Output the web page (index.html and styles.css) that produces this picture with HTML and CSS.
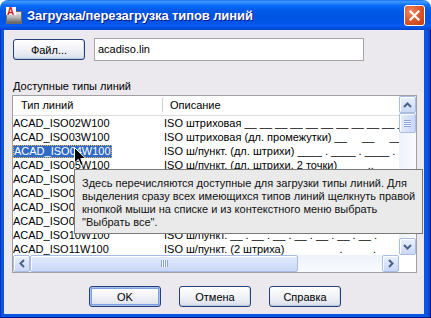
FILE: index.html
```html
<!DOCTYPE html>
<html lang="ru">
<head>
<meta charset="utf-8">
<title>Загрузка/перезагрузка типов линий</title>
<link rel="stylesheet" href="styles.css">
</head>
<body>
<div class="window">
  <div class="titlebar">
    <svg class="app-icon" width="16" height="17" viewBox="0 0 16 17">
      <defs>
        <linearGradient id="ig" x1="0" y1="0" x2="0" y2="1">
          <stop offset="0" stop-color="#f2f2f2"/>
          <stop offset="0.5" stop-color="#b4b4b4"/>
          <stop offset="1" stop-color="#5a5a5a"/>
        </linearGradient>
      </defs>
      <rect x="0.5" y="4.5" width="15" height="12" fill="url(#ig)" stroke="#6b6b6b"/>
      <rect x="0" y="0" width="10" height="8" fill="#fff"/>
      <text x="1" y="8" font-family="Liberation Sans, Arial, sans-serif" font-weight="bold" font-size="10" fill="#e01010">A</text>
    </svg>
    <span class="title">Загрузка/перезагрузка типов линий</span>
    <div class="close" aria-label="Закрыть">
      <svg width="11" height="11" viewBox="0 0 11 11"><path d="M1.5 1.5 L9.5 9.5 M9.5 1.5 L1.5 9.5" stroke="#fff" stroke-width="2.2" stroke-linecap="square"/></svg>
    </div>
  </div>
  <div class="frame">
    <div class="client">
      <div class="file-row">
        <button class="btn">Файл...</button>
        <div class="field">acadiso.lin</div>
      </div>
      <div class="label">Доступные типы линий</div>
      <div class="list">
        <div class="list-view">
          <div class="header">
            <div class="hcell h1">Тип линий</div>
            <div class="hcell h2">Описание</div>
          </div>
          <div class="row"><span class="c1">ACAD_ISO02W100</span><span class="c2">ISO штриховая __ __ __ __ __ __ __ __ __ __ __ __ __</span></div>
          <div class="row"><span class="c1">ACAD_ISO03W100</span><span class="c2">ISO штриховая (дл. промежутки) __     __     __</span></div>
          <div class="row selected"><span class="c1"><span class="sel">ACAD_ISO04W100</span></span><span class="c2">ISO ш/пункт. (дл. штрихи) ____ . ____ . ____ .</span></div>
          <div class="row"><span class="c1">ACAD_ISO05W100</span><span class="c2">ISO ш/пункт. (дл. штрихи, 2 точки) ____ .. ____ ..</span></div>
          <div class="row"><span class="c1">ACAD_ISO06W100</span><span class="c2">ISO ш/пункт. (дл. штрихи, 3 точки) ____ ... ____</span></div>
          <div class="row"><span class="c1">ACAD_ISO07W100</span><span class="c2">ISO точечная . . . . . . . . . . . . . . . . . . .</span></div>
          <div class="row"><span class="c1">ACAD_ISO08W100</span><span class="c2">ISO штриховая (дл. и кор. штрихи) ____ __ ____</span></div>
          <div class="row"><span class="c1">ACAD_ISO09W100</span><span class="c2">ISO штриховая (дл. и 2 кор. штриха) ____ __ __</span></div>
          <div class="row"><span class="c1">ACAD_ISO10W100</span><span class="c2">ISO ш/пункт. __ . __ . __ . __ . __ . __ . __ .</span></div>
          <div class="row"><span class="c1">ACAD_ISO11W100</span><span class="c2">ISO ш/пункт. (2 штриха)                  .          .            .</span></div>
        </div>
        <div class="vscroll">
          <div class="sb-btn">
            <svg width="9" height="6" viewBox="0 0 9 6"><path d="M1 5 L4.5 1.5 L8 5" fill="none" stroke="#4d6185" stroke-width="2"/></svg>
          </div>
          <div class="vthumb"><span class="grip-h"></span></div>
          <div class="track"></div>
          <div class="sb-btn">
            <svg width="9" height="6" viewBox="0 0 9 6"><path d="M1 1 L4.5 4.5 L8 1" fill="none" stroke="#4d6185" stroke-width="2"/></svg>
          </div>
        </div>
        <div class="hscroll">
          <div class="sb-btn">
            <svg width="6" height="9" viewBox="0 0 6 9"><path d="M5 1 L1.5 4.5 L5 8" fill="none" stroke="#4d6185" stroke-width="2"/></svg>
          </div>
          <div class="hthumb"><span class="grip-v"></span></div>
          <div class="track"></div>
          <div class="sb-btn">
            <svg width="6" height="9" viewBox="0 0 6 9"><path d="M1 1 L4.5 4.5 L1 8" fill="none" stroke="#4d6185" stroke-width="2"/></svg>
          </div>
        </div>
        <div class="corner"></div>
      </div>
      <div class="actions">
        <button class="btn default">OK</button>
        <button class="btn">Отмена</button>
        <button class="btn">Справка</button>
      </div>
    </div>
  </div>
  <div class="tooltip">Здесь перечисляются доступные для загрузки типы линий. Для<br>выделения сразу всех имеющихся типов линий щелкнуть правой<br>кнопкой мыши на списке и из контекстного меню выбрать<br>"Выбрать все".</div>
  <svg class="cursor" width="13" height="20" viewBox="0 0 13 20">
    <path d="M0.5 0.5 V16 L4.3 12.4 L6.9 18.6 L9.3 17.6 L6.8 11.6 H11.8 Z" fill="#000" stroke="#fff" stroke-width="1"/>
  </svg>
</div>
</body>
</html>
```

FILE: styles.css
```css
* { box-sizing: border-box; }
html, body { margin: 0; padding: 0; background: #fff; }
body {
  font-family: "Liberation Sans", Arial, sans-serif;
  font-size: 11px;
  color: #000;
}
.window {
  position: relative;
  width: 431px;
  height: 318px;
  overflow: hidden;
}
.titlebar {
  height: 30px;
  display: flex;
  align-items: center;
  padding: 0 6px 0 6px;
  border-radius: 8px 8px 0 0;
  background: linear-gradient(to bottom,
    #0a5fef 0px, #3f97ff 1px, #2e8bff 3px, #0f6ef8 5px, #0565f2 7px,
    #0058e6 11px, #0054e3 17px, #0056e9 23px, #0a5cf0 26px, #004fdd 28px, #0343d0 30px);
}
.app-icon { flex: none; }
.title {
  flex: 1;
  margin-left: 5px;
  color: #fff;
  font-weight: bold;
  font-size: 13px;
  letter-spacing: -0.1px;
  text-shadow: 1px 1px 0 #0a1883;
  white-space: nowrap;
}
.close {
  flex: none;
  width: 21px;
  height: 21px;
  border: 1px solid #fff;
  border-radius: 3px;
  background: radial-gradient(circle at 30% 30%, #f08a66 0%, #e0582f 45%, #c43c12 100%);
  display: flex;
  align-items: center;
  justify-content: center;
  margin-top: 1px;
}
.frame {
  height: 288px;
  padding: 0 7px 4px 4px;
  background: #0a55e2;
  box-shadow: inset 1px 0 0 #0831b8, inset -1px 0 0 #00138c, inset 0 -1px 0 #00138c, inset -3px 0 0 #0848d0;
}
.client {
  height: 100%;
  background: #ebe9ed;
  padding: 8px 7px 0 8px;
  display: flex;
  flex-direction: column;
}
.file-row {
  display: flex;
  align-items: center;
  height: 23px;
  padding-left: 1px;
  gap: 9px;
}
.btn {
  width: 72px;
  height: 21px;
  padding: 0;
  border: 1px solid #223f78;
  border-radius: 3px;
  background: linear-gradient(to bottom, #ffffff 0%, #f3f4f8 45%, #e4e8f1 80%, #d2d9e8 100%);
  box-shadow: inset 0 -1px 0 #c0cadf, inset -1px 0 0 #d4dbea;
  font-family: inherit;
  font-size: 11px;
  color: #000;
  cursor: default;
}
.btn.default {
  box-shadow: inset 0 0 0 1px #a9c0ee, inset 0 0 0 2px #7c9fdf;
}
.field {
  width: 270px;
  height: 23px;
  border: 1px solid #a5a5a5;
  background: #fff;
  padding-left: 3px;
  line-height: 20px;
}
.label {
  margin-top: 19px;
  padding-left: 1px;
  line-height: 13px;
  height: 13px;
}
.list {
  margin-top: 2px;
  width: 405px;
  height: 178px;
  border: 1px solid #a0a0a0;
  background: #fff;
  display: grid;
  grid-template-columns: 386px 17px;
  grid-template-rows: 159px 17px;
}
.list-view {
  overflow: hidden;
}
.header {
  display: flex;
  height: 20px;
  border-bottom: 1px solid #dcdcdc;
  line-height: 19px;
}
.hcell { position: relative; white-space: nowrap; }
.h1 { width: 150px; padding-left: 8px; }
.h1::after {
  content: "";
  position: absolute;
  right: 0;
  top: 2px;
  bottom: 3px;
  width: 1px;
  background: #d0d0d0;
}
.h2 { padding-left: 7px; }
.row {
  display: flex;
  height: 14px;
  line-height: 14px;
  overflow: hidden;
}
.c1 { flex: none; width: 150px; white-space: pre; }
.c2 { flex: none; padding-left: 1px; white-space: pre; }
.sel {
  display: inline-block;
  height: 13px;
  line-height: 13px;
  padding: 0 1px;
  background: #316ac5;
  color: #fff;
  outline: 1px dotted #e3b95a;
  outline-offset: -1px;
}
.vscroll {
  display: flex;
  flex-direction: column;
  background: linear-gradient(to right, #eef2fb, #f9fbfe);
}
.hscroll {
  display: flex;
  background: linear-gradient(to bottom, #eef2fb, #f9fbfe);
}
.corner { background: #fff; }
.track { flex: 1; }
.sb-btn {
  flex: none;
  width: 17px;
  height: 17px;
  border: 1px solid #a9bde4;
  border-radius: 2px;
  background: linear-gradient(to bottom, #eaf0fd, #cad8f5);
  box-shadow: inset 1px 1px 0 #fff;
  display: flex;
  align-items: center;
  justify-content: center;
}
.vthumb {
  flex: none;
  height: 20px;
  border: 1px solid #a9bde4;
  border-radius: 2px;
  background: linear-gradient(to right, #e4ebfc, #c9d7f6);
  box-shadow: inset 1px 1px 0 #fff;
  display: flex;
  align-items: center;
  justify-content: center;
}
.grip-h {
  width: 7px;
  height: 7px;
  background: repeating-linear-gradient(to bottom, #8ea3cf 0 1px, #eef3fd 1px 2px);
}
.hthumb {
  flex: none;
  width: 268px;
  border: 1px solid #a9bde4;
  border-radius: 2px;
  background: linear-gradient(to bottom, #e4ebfc, #c9d7f6);
  box-shadow: inset 1px 1px 0 #fff;
  display: flex;
  align-items: center;
  justify-content: center;
}
.grip-v {
  width: 7px;
  height: 7px;
  background: repeating-linear-gradient(to right, #8ea3cf 0 1px, #eef3fd 1px 2px);
}
.actions {
  margin-top: 13px;
  display: flex;
  justify-content: center;
  gap: 18px;
  padding-left: 1px;
}
.tooltip {
  position: absolute;
  left: 74px;
  top: 169px;
  width: 349px;
  height: 65px;
  border: 1px solid #7a7a7a;
  background: #eaeaea;
  padding: 7px 0 0 7px;
  line-height: 13px;
  white-space: nowrap;
  color: #111;
}
.cursor {
  position: absolute;
  left: 74px;
  top: 147px;
}
```
